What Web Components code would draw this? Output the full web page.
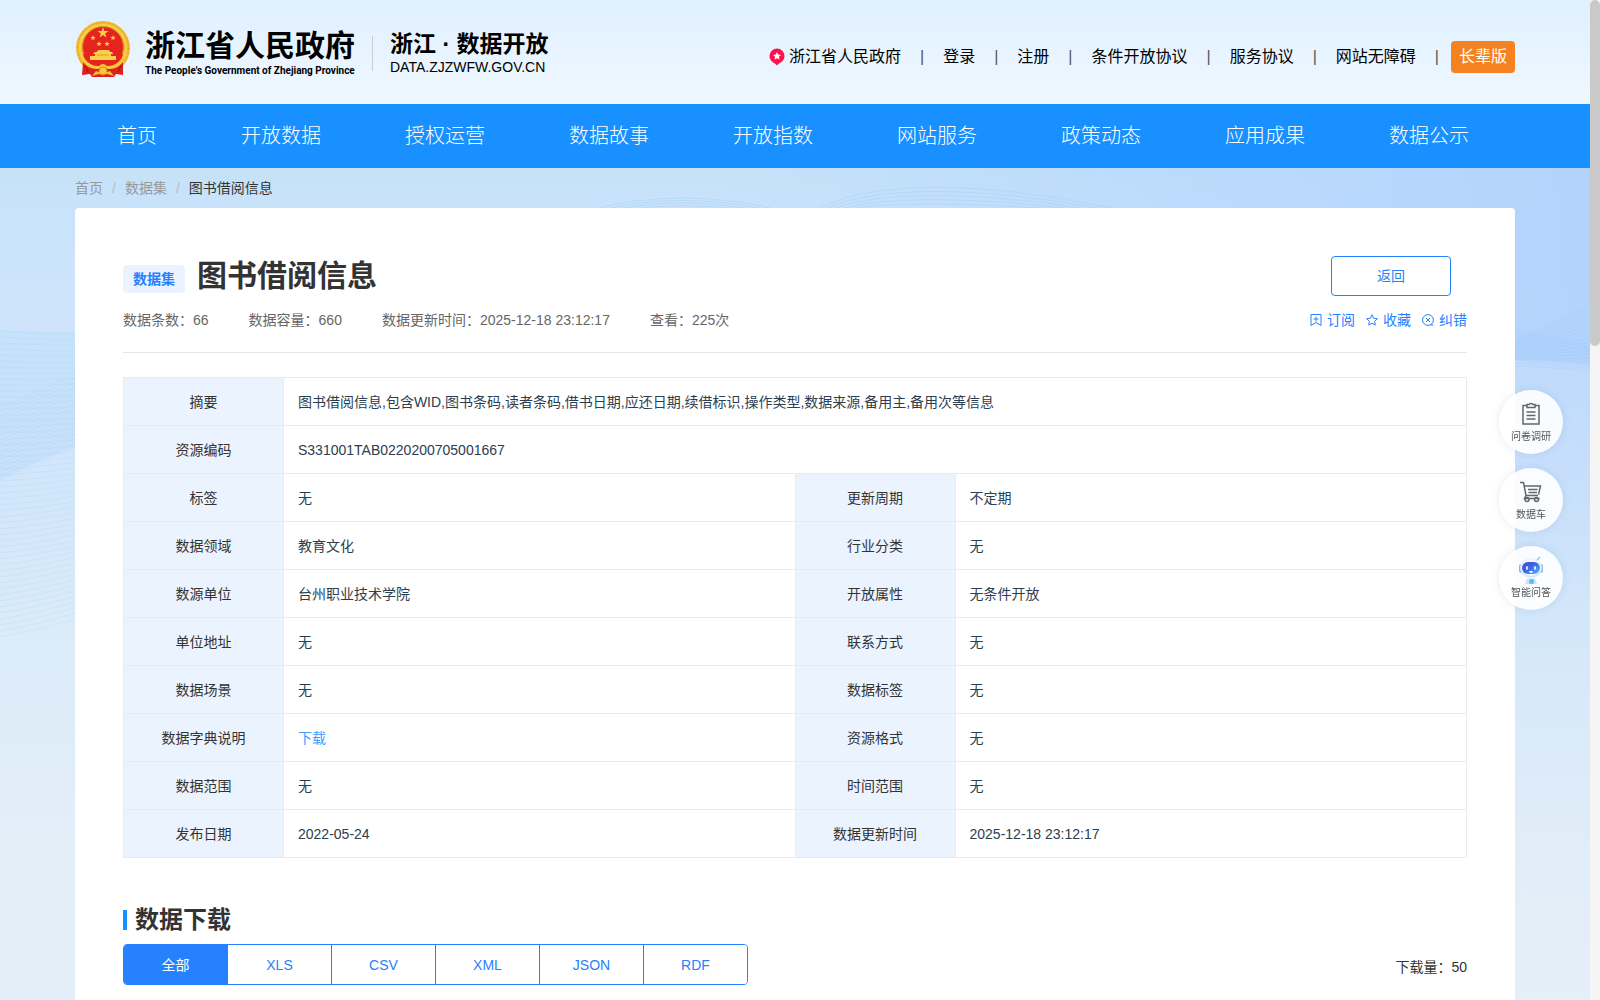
<!DOCTYPE html>
<html lang="zh-CN">
<head>
<meta charset="utf-8">
<meta name="viewport" content="width=device-width, initial-scale=1">
<title>图书借阅信息</title>
<style>
    html, body {
        margin: 0;
        height: 100%;
    }
    body {
        --blue: #2681ff;
        --gutter: 75px;
        font-family: "Liberation Sans", "Noto Sans CJK SC", sans-serif;
        font-size: 14px;
        line-height: 20px;
        color: #333;
        overflow: hidden;
    }
</style>
</head>
<body>
<open-data-page>
    <site-header slot="header"></site-header>
    <main-nav slot="header"></main-nav>
    <crumb-trail>
        <a href="#home">首页</a>
        <a href="#datasets">数据集</a>
        <span>图书借阅信息</span>
    </crumb-trail>
    <detail-card kind="数据集" heading="图书借阅信息">
        <span slot="meta">数据条数：66</span>
        <span slot="meta">数据容量：660</span>
        <span slot="meta">数据更新时间：2025-12-18 23:12:17</span>
        <span slot="meta">查看：225次</span>
        <info-table></info-table>
        <download-section heading="数据下载" count="50"></download-section>
    </detail-card>
</open-data-page>
<float-tools></float-tools>
<page-scrollbar></page-scrollbar>

<script>
function attach(host, css, html) {
    host.attachShadow({ mode: 'open' });
    host.shadowRoot.innerHTML = `<style>*{box-sizing:border-box}${css}</style>${html}`;
}

class OpenDataPage extends HTMLElement {
    constructor() {
        super();
        const css = /*css*/`
            :host {
                display: flex;
                flex-direction: column;
                min-height: 100vh;
                margin-right: 10px;
            }
            .body {
                position: relative;
                flex: 1;
                display: flex;
                flex-direction: column;
                padding: 0 var(--gutter);
                background: linear-gradient(#c5e2f8, #c9e3fc 50px, #cfe4fa 160px, #d3e7fa 340px, #dcecf8 480px, #e3eef8 700px, #e5eef8);
            }
            page-backdrop {
                position: absolute;
                inset: 0;
            }
            .content {
                position: relative;
                flex: 1;
                display: flex;
                flex-direction: column;
            }
            ::slotted(detail-card) {
                flex: 1;
            }
        `;
        attach(this, css, /*html*/`
            <header><slot name="header"></slot></header>
            <div class="body">
                <page-backdrop></page-backdrop>
                <main class="content"><slot></slot></main>
            </div>
        `);
    }
}

// Soft waves behind the card, drawn as bundles of thin lines
class PageBackdrop extends HTMLElement {
    constructor() {
        super();
        const css = /*css*/`
            :host {
                display: block;
                overflow: hidden;
                background: linear-gradient(90deg, rgba(178, 211, 253, 0) 45%, rgba(178, 211, 253, .6) 80%, #b3d3fd);
            }
            svg {
                display: block;
                width: 100%;
                height: 832px;
            }
        `;
        attach(this, css, /*html*/`
            <svg viewBox="0 0 1590 832" preserveAspectRatio="none" fill="none" aria-hidden="true">
                <defs>
                    <linearGradient id="fade" x1="0" y1="0" x2="0" y2="1">
                        <stop offset="0" stop-color="#cde2fb" stop-opacity=".45"/>
                        <stop offset=".2" stop-color="#cde2fb" stop-opacity=".8"/>
                        <stop offset=".4" stop-color="#d3e7fa"/>
                        <stop offset=".7" stop-color="#dfecf8"/>
                        <stop offset="1" stop-color="#e5eff8"/>
                    </linearGradient>
                    <linearGradient id="left" x1="0" y1="0" x2="0" y2="1">
                        <stop offset="0" stop-color="#c4e3fa" stop-opacity=".9"/>
                        <stop offset="1" stop-color="#c2dcfb" stop-opacity=".5"/>
                    </linearGradient>
                </defs>
                <path d="M1000 195 Q1520 185 1590 197 V832 H1000Z" fill="url(#fade)"/>
                <path d="M0 162 Q40 165 90 163 V275 Q40 290 0 314Z" fill="url(#left)"/>
                <g stroke="#a9d0f7" stroke-opacity=".25">${this.leftWave()}</g>
                <g stroke="#9ccdf5" stroke-opacity=".4">${this.hills()}</g>
                <g stroke="#9cc6f8" stroke-opacity=".3">${this.rightWave()}</g>
            </svg>
        `);
    }

    leftWave() {
        let out = '';
        for (let i = 0; i < 52; i++) {
            const y = 163 + i * 6;
            out += `<path d="M0 ${y} Q40 ${y + 3 - i / 5} 90 ${y + 3 - i / 2}"/>`;
        }
        for (let i = 0; i < 18; i++) {
            out += `<path d="M0 ${240 + i * 4} L90 ${200 + i * 4}"/>`;
        }
        return out;
    }

    hills() {
        let out = '';
        for (let i = 0; i < 5; i++) {
            out += `<path d="M${590 + i * 12} 42 Q680 ${18 + i * 5} ${780 - i * 12} 42"/>`;
            out += `<path d="M${815 + i * 8} 42 C880 ${8 + i * 6} 1000 ${16 + i * 5} ${1120 - i * 14} 42"/>`;
        }
        return out;
    }

    rightWave() {
        let out = '';
        for (let i = 0; i < 14; i++) {
            out += `<path d="M1500 ${192 - i} L1590 ${190 - i * 4}"/>`;
            out += `<path d="M1500 ${158 + i * 3} L1590 ${176 + i * 2}"/>`;
        }
        return out;
    }
}

class SiteHeader extends HTMLElement {
    constructor() {
        super();
        const css = /*css*/`
            :host {
                display: flex;
                justify-content: space-between;
                align-items: center;
                height: 104px;
                padding: 0 var(--gutter);
                background: linear-gradient(#e0f0ff, #eff8ff);
                color: #000;
            }
            a {
                color: inherit;
                text-decoration: none;
            }
            .brand, .links, .pin {
                display: flex;
                align-items: center;
            }
            .brand {
                padding-bottom: 6px;
            }
            .emblem {
                width: 56px;
                height: 58px;
                margin-right: 14px;
            }
            .gov, .site {
                margin-top: 8px;
            }
            .name {
                font-size: 30px;
                line-height: 36px;
                font-weight: 700;
            }
            .en {
                font-family: Roboto, "Liberation Sans", sans-serif;
                font-size: 10px;
                line-height: 14px;
                font-weight: 700;
                white-space: nowrap;
            }
            .site {
                margin-left: 17px;
                padding-left: 18px;
                background: linear-gradient(#ccc, #ccc) left center / 1px 35px no-repeat;
            }
            .site .cn {
                font-size: 23px;
                line-height: 28px;
                font-weight: 700;
            }
            .site .host {
                font-size: 14px;
                line-height: 18px;
            }
            .links {
                padding-top: 10px;
                font-size: 16px;
                line-height: 32px;
            }
            .links i {
                margin: 0 19px;
                font-style: normal;
                color: #555;
            }
            .links i:last-of-type {
                margin-right: 12px;
            }
            .pin svg {
                margin-right: 4px;
            }
            button {
                height: 32px;
                padding: 0 8px;
                border: 0;
                border-radius: 4px;
                background: #f58220;
                color: #fff;
                font: inherit;
                line-height: 32px;
            }
        `;
        const links = ['登录', '注册', '条件开放协议', '服务协议', '网站无障碍'];
        attach(this, css, /*html*/`
            <div class="brand">
                <svg class="emblem" viewBox="0 0 56 58" aria-hidden="true">
                    <circle cx="28" cy="28" r="27" fill="#f2bb31"/>
                    <circle cx="28" cy="28" r="25.500" fill="none" stroke="#e2a526" stroke-dasharray="2 2"/>
                    <circle cx="28" cy="28" r="23" fill="none" stroke="#fbcf4c" stroke-width="2"/>
                    <circle cx="28" cy="27" r="20.500" fill="#e6241f" stroke="#d8941c"/>
                    <path d="M8 42 Q16 40 28 45 Q40 40 48 42 L48 55 L41 54 L39 57 H17 L15 54 L7 55Z" fill="#dd221d"/>
                    <path d="M8 34 H48 Q46 42 40 46 H16 Q10 42 8 34Z" fill="#e6241f"/>
                    <path d="M9 38 Q16 47 24 46 Q28 42 32 46 Q40 47 47 38 L49 41 Q42 50 33 49 Q28 46 23 49 Q14 50 7 41Z" fill="#f6c63c"/>
                    <path d="M20 36 V34 H18 V33.500 L20 32 H22 V31 L24 30 H33 L35 31 V32 H37 L38 33.500 V34 H36 V36 H41 V40 H15 V36Z" fill="#f8cf4a"/>
                    <path d="M22 35 H34" stroke="#e39b22"/>
                    <path d="M28 7 L29.300 11 H33.500 L30.100 13.500 L31.400 17.500 L28 15 L24.600 17.500 L25.900 13.500 L22.500 11 H26.700Z" fill="#fbd14b"/>
                    <g fill="#fbd14b">
                        <path d="M18 15l.7 2h2l-1.600 1.200.6 2-1.700-1.200-1.700 1.200.6-2L15.300 17h2z"/>
                        <path d="M38 15l.7 2h2l-1.600 1.200.6 2-1.700-1.200-1.700 1.200.6-2L35.300 17h2z"/>
                        <path d="M24 21l.7 2h2l-1.600 1.200.6 2-1.700-1.200-1.700 1.200.6-2L21.300 23h2z"/>
                        <path d="M32 21l.7 2h2l-1.600 1.200.6 2-1.700-1.200-1.700 1.200.6-2L29.300 23h2z"/>
                    </g>
                    <circle cx="28" cy="51" r="4" fill="#f6c63c" stroke="#da8f1c"/>
                    <path d="M17 56 L21 51 L26 53 L30 53 L35 51 L39 56 L32 54 H24Z" fill="#f4bd33"/>
                    <path d="M10 45 L13 52 M46 45 L43 52" stroke="#b81612" stroke-width="1.500"/>
                </svg>
                <div class="gov">
                    <div class="name">浙江省人民政府</div>
                    <div class="en">The People's Government of Zhejiang Province</div>
                </div>
                <div class="site">
                    <div class="cn">浙江 · 数据开放</div>
                    <div class="host">DATA.ZJZWFW.GOV.CN</div>
                </div>
            </div>
            <nav class="links">
                <a class="pin" href="#gov">
                    <svg width="16" height="18" viewBox="0 0 16 18" aria-hidden="true">
                        <path d="M8 .5a7.500 7.500 0 0 1 7.500 7.500c0 4-3.500 6.800-5.500 7.500L8 17.500 6 15.500C4 14.800.5 12 .5 8A7.500 7.500 0 0 1 8 .5z" fill="#ff1150"/>
                        <path d="M8 4l1.200 2.600 2.800.3-2.100 1.900.6 2.800L8 10.200l-2.500 1.400.6-2.800L4 6.900l2.800-.3z" fill="#fff"/>
                    </svg>浙江省人民政府</a>
                ${links.map(text => `<i>|</i><a href="#">${text}</a>`).join('')}
                <i>|</i>
                <button type="button">长辈版</button>
            </nav>
        `);
    }
}

class MainNav extends HTMLElement {
    constructor() {
        super();
        const css = /*css*/`
            :host {
                display: block;
                background: #1890ff;
            }
            nav {
                display: flex;
                padding: 0 var(--gutter);
            }
            a {
                padding: 0 42px;
                font-size: 20px;
                line-height: 64px;
                font-weight: 300;
                color: #fff;
                text-decoration: none;
                white-space: nowrap;
            }
        `;
        const items = ['首页', '开放数据', '授权运营', '数据故事', '开放指数', '网站服务', '政策动态', '应用成果', '数据公示'];
        attach(this, css, `<nav>${items.map(text => `<a href="#">${text}</a>`).join('')}</nav>`);
    }
}

class CrumbTrail extends HTMLElement {
    constructor() {
        super();
        const css = /*css*/`
            :host {
                display: flex;
                line-height: 40px;
            }
            ::slotted(a) {
                color: #999;
                text-decoration: none;
            }
            ::slotted(a)::after {
                content: "/";
                margin: 0 9px;
                color: #bbb;
            }
        `;
        attach(this, css, '<slot></slot>');
    }
}

class DetailCard extends HTMLElement {
    constructor() {
        super();
        const css = /*css*/`
            :host {
                display: block;
                padding: 48px;
                border-radius: 4px 4px 0 0;
                background: #fff;
            }
            .top, .sub, .meta, .actions, .actions a {
                display: flex;
            }
            .top {
                align-items: flex-start;
                gap: 12px;
            }
            .kind {
                margin-top: 9px;
                padding: 0 10px;
                border-radius: 4px;
                background: #ebf3ff;
                color: var(--blue);
                font-weight: 700;
                line-height: 28px;
            }
            h1 {
                flex: 1;
                margin: 0;
                font-size: 30px;
                line-height: 40px;
            }
            button {
                width: 120px;
                height: 40px;
                margin-right: 16px;
                border: 1px solid var(--blue);
                border-radius: 4px;
                background: #fff;
                color: var(--blue);
                font: inherit;
            }
            .sub {
                justify-content: space-between;
                padding: 14px 0 22px;
                border-bottom: 1px solid #e6e6e6;
                margin-bottom: 24px;
                color: #666;
            }
            .meta {
                gap: 40px;
            }
            .actions {
                gap: 11px;
            }
            .actions a {
                align-items: center;
                gap: 5px;
                color: var(--blue);
                text-decoration: none;
            }
            svg {
                fill: none;
                stroke: var(--blue);
            }
        `;
        attach(this, css, /*html*/`
            <div class="top">
                <span class="kind">${this.getAttribute('kind')}</span>
                <h1>${this.getAttribute('heading')}</h1>
                <button type="button">返回</button>
            </div>
            <div class="sub">
                <div class="meta"><slot name="meta"></slot></div>
                <div class="actions">
                    <a href="#subscribe">
                        <svg width="12" height="12" viewBox="0 0 12 12"><path d="M1 .5h10v11L6 8.500l-5 3zM6 2.500v5M3.500 5h5"/></svg>订阅</a>
                    <a href="#favorite">
                        <svg width="12" height="12" viewBox="0 0 12 12"><path d="M6 .8l1.600 3.400 3.700.5-2.700 2.600.7 3.700L6 9.200 2.700 11l.7-3.700L.7 4.700l3.700-.5z"/></svg>收藏</a>
                    <a href="#correct">
                        <svg width="12" height="12" viewBox="0 0 12 12"><circle cx="6" cy="6" r="5.400"/><path d="M4 4l4 4M8 4L4 8M8.500 11h3"/></svg>纠错</a>
                </div>
            </div>
            <slot></slot>
        `);
    }
}

class InfoTable extends HTMLElement {
    constructor() {
        super();
        const css = /*css*/`
            :host {
                display: block;
            }
            table {
                width: 100%;
                table-layout: fixed;
                border-collapse: collapse;
            }
            .label {
                width: 160px;
            }
            th, td {
                height: 48px;
                padding: 0 14px;
                border: 1px solid #ebebeb;
                font-weight: 400;
            }
            th {
                background: #ebf3ff;
                color: #333;
            }
            td {
                color: #2c3e50;
            }
            a {
                color: #409eff;
                text-decoration: none;
            }
        `;
        const rows = [
            ['摘要', '图书借阅信息,包含WID,图书条码,读者条码,借书日期,应还日期,续借标识,操作类型,数据来源,备用主,备用次等信息'],
            ['资源编码', 'S331001TAB0220200705001667'],
            ['标签', '无', '更新周期', '不定期'],
            ['数据领域', '教育文化', '行业分类', '无'],
            ['数源单位', '台州职业技术学院', '开放属性', '无条件开放'],
            ['单位地址', '无', '联系方式', '无'],
            ['数据场景', '无', '数据标签', '无'],
            ['数据字典说明', '<a href="#dictionary">下载</a>', '资源格式', '无'],
            ['数据范围', '无', '时间范围', '无'],
            ['发布日期', '2022-05-24', '数据更新时间', '2025-12-18 23:12:17'],
        ];
        const body = rows.map(([k1, v1, k2, v2]) => k2
            ? `<tr><th scope="row">${k1}</th><td>${v1}</td><th scope="row">${k2}</th><td>${v2}</td></tr>`
            : `<tr><th scope="row">${k1}</th><td colspan="3">${v1}</td></tr>`).join('');
        attach(this, css, /*html*/`
            <table>
                <colgroup><col class="label"><col><col class="label"><col></colgroup>
                <tbody>${body}</tbody>
            </table>
        `);
    }
}

class DownloadSection extends HTMLElement {
    constructor() {
        super();
        const css = /*css*/`
            :host {
                display: block;
                margin-top: 46px;
            }
            h2 {
                display: flex;
                align-items: center;
                gap: 8px;
                margin: 0 0 8px;
                font-size: 24px;
                line-height: 32px;
            }
            h2::before {
                content: "";
                width: 4px;
                height: 20px;
                background: #1890ff;
            }
            .row {
                display: flex;
                justify-content: space-between;
                align-items: flex-end;
            }
            .tabs {
                display: flex;
                border: 1px solid var(--blue);
                border-radius: 4px;
                overflow: hidden;
            }
            button {
                width: 104px;
                height: 39px;
                padding: 0;
                border: 0;
                border-left: 1px solid var(--blue);
                background: #fff;
                color: var(--blue);
                font: inherit;
            }
            button:first-child {
                width: 103px;
                border-left: 0;
            }
            button.on {
                background: var(--blue);
                color: #fff;
            }
            .count {
                margin-bottom: 8px;
            }
        `;
        const formats = ['全部', 'XLS', 'CSV', 'XML', 'JSON', 'RDF'];
        attach(this, css, /*html*/`
            <h2>${this.getAttribute('heading')}</h2>
            <div class="row">
                <div class="tabs">${formats.map((f, i) => `<button type="button"${i ? '' : ' class="on"'}>${f}</button>`).join('')}</div>
                <span class="count">下载量：${this.getAttribute('count')}</span>
            </div>
        `);
    }

    connectedCallback() {
        const tabs = this.shadowRoot.querySelector('.tabs');
        tabs.addEventListener('click', (e) => {
            const tab = e.target.closest('button');
            if (!tab) return;
            tabs.querySelector('.on').classList.remove('on');
            tab.classList.add('on');
        });
    }
}

class FloatTools extends HTMLElement {
    constructor() {
        super();
        const css = /*css*/`
            :host {
                position: fixed;
                right: 37px;
                top: 390px;
                display: flex;
                flex-direction: column;
                gap: 14px;
            }
            button {
                display: flex;
                flex-direction: column;
                align-items: center;
                gap: 2px;
                width: 64px;
                height: 64px;
                padding: 10px 0 0;
                border: 0;
                border-radius: 50%;
                background: rgba(255, 255, 255, .9);
                box-shadow: 0 0 8px rgba(60, 110, 180, .14);
                color: #555;
                font: inherit;
                font-size: 10px;
                line-height: 14px;
            }
            svg {
                width: 28px;
                height: 28px;
                fill: none;
                stroke: #666;
                stroke-width: 1.5;
            }
        `;
        attach(this, css, /*html*/`
            <button type="button">
                <svg viewBox="0 0 28 28"><path d="M10 5.500H6v18.500h16V5.500h-4M10 4.500h2c.5-1.500 3.500-1.500 4 0h2v3h-8zM9.500 12h9M9.500 15.500h9M9.500 19h9"/></svg>
                问卷调研
            </button>
            <button type="button">
                <svg viewBox="0 0 28 28"><path d="M3 4.500h3.500L9 17.500h12M7.300 8h16.200l-2 8.500M11 11.500h9.500M11.500 14.500h8.500M9 17.500l-1.500 3h15"/><circle cx="10" cy="21.500" r="2"/><circle cx="19.500" cy="21.500" r="2"/></svg>
                数据车
            </button>
            <button type="button">
                <svg viewBox="0 0 28 28">
                    <defs>
                        <linearGradient id="face" x1="0" y1="0" x2="1" y2="1">
                            <stop offset="0" stop-color="#3b49c9"/>
                            <stop offset=".5" stop-color="#4267e8"/>
                            <stop offset="1" stop-color="#4fc3f5"/>
                        </linearGradient>
                    </defs>
                    <g stroke="none">
                        <rect x="2" y="8" width="4" height="9" rx="2" fill="#8bb8ee"/>
                        <rect x="22" y="8" width="4" height="9" rx="2" fill="#8bb8ee"/>
                        <ellipse cx="14" cy="12" rx="11" ry="9.500" fill="#d5e5f8"/>
                        <ellipse cx="14" cy="11.500" rx="10" ry="8.500" fill="#f1f7fe"/>
                        <rect x="5" y="6" width="18" height="12" rx="6" fill="url(#face)"/>
                        <ellipse cx="10" cy="12" rx="1.200" ry="2" fill="#bfeaff"/>
                        <ellipse cx="18" cy="12" rx="1.200" ry="2" fill="#bfeaff"/>
                        <path d="M12 15h4q-.5 2-2 2t-2-2z" fill="#fff"/>
                        <path d="M10 22.500h8l2 5.500H8z" fill="#cfe3f9"/>
                        <circle cx="14.500" cy="25.500" r="2.500" fill="#55bdf8"/>
                    </g>
                    <path d="M20 4l3-3" stroke="#8bc4f5"/>
                </svg>
                智能问答
            </button>
        `);
    }
}

class PageScrollbar extends HTMLElement {
    constructor() {
        super();
        const css = /*css*/`
            :host {
                position: fixed;
                top: 0;
                right: 0;
                bottom: 0;
                width: 10px;
                background: #f5f5f5;
            }
            .thumb {
                height: 34.6%;
                border-radius: 5px;
                background: #c9c9c9;
            }
        `;
        attach(this, css, '<div class="thumb"></div>');
    }
}

customElements.define('page-backdrop', PageBackdrop);
customElements.define('open-data-page', OpenDataPage);
customElements.define('site-header', SiteHeader);
customElements.define('main-nav', MainNav);
customElements.define('crumb-trail', CrumbTrail);
customElements.define('detail-card', DetailCard);
customElements.define('info-table', InfoTable);
customElements.define('download-section', DownloadSection);
customElements.define('float-tools', FloatTools);
customElements.define('page-scrollbar', PageScrollbar);
</script>
</body>
</html>
